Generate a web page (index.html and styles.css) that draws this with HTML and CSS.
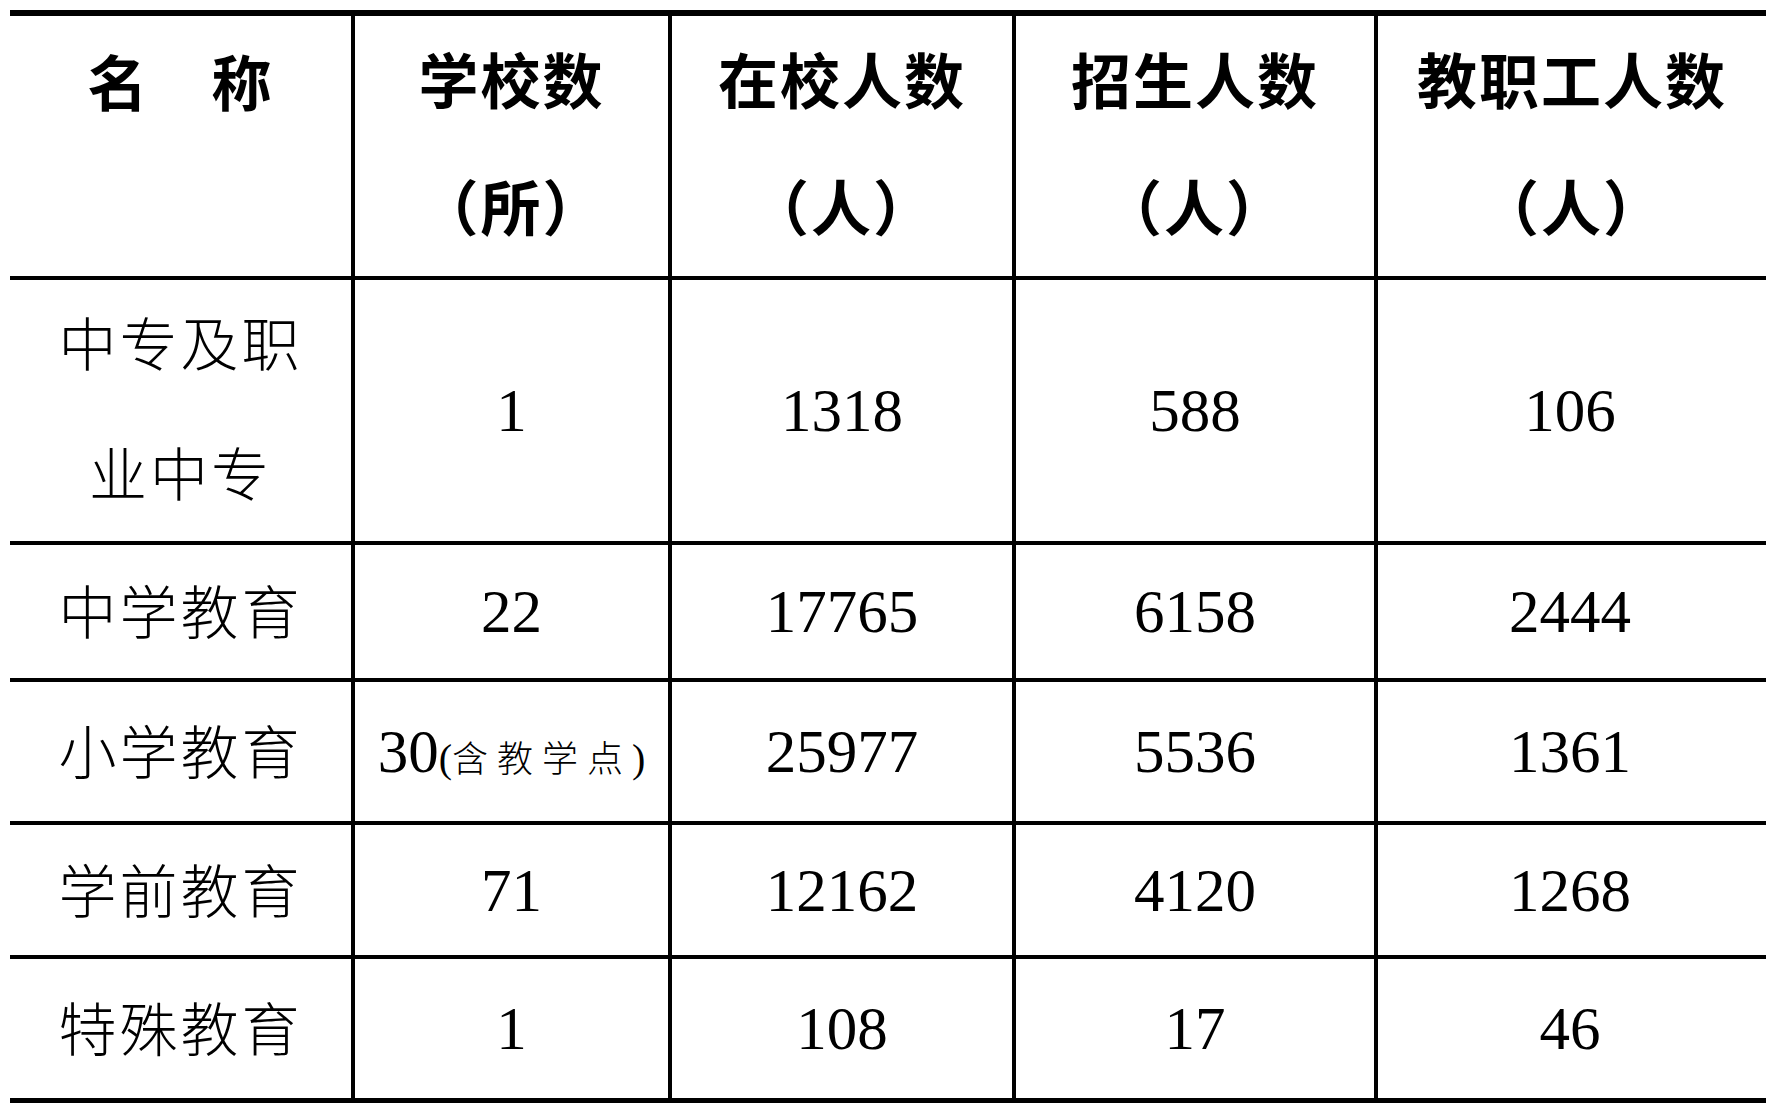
FILE: index.html
```html
<!DOCTYPE html>
<html lang="zh-CN">
<head>
<meta charset="utf-8">
<title>教育统计</title>
<link rel="stylesheet" href="styles.css">
</head>
<body>
<div class="table">
  <div class="cell head"><span class="line">名　称</span><span class="line"></span></div>
  <div class="cell head"><span class="line">学校数</span><span class="line">（所）</span></div>
  <div class="cell head"><span class="line">在校人数</span><span class="line">（人）</span></div>
  <div class="cell head"><span class="line">招生人数</span><span class="line">（人）</span></div>
  <div class="cell head last"><span class="line">教职工人数</span><span class="line">（人）</span></div>

  <div class="cell name two"><span class="line">中专及职</span><span class="line">业中专</span></div>
  <div class="cell num">1</div>
  <div class="cell num">1318</div>
  <div class="cell num">588</div>
  <div class="cell num last">106</div>

  <div class="cell name">中学教育</div>
  <div class="cell num">22</div>
  <div class="cell num">17765</div>
  <div class="cell num">6158</div>
  <div class="cell num last">2444</div>

  <div class="cell name">小学教育</div>
  <div class="cell num">30<span class="note"><span class="paren">(</span>含教学点<span class="paren">)</span></span></div>
  <div class="cell num">25977</div>
  <div class="cell num">5536</div>
  <div class="cell num last">1361</div>

  <div class="cell name">学前教育</div>
  <div class="cell num">71</div>
  <div class="cell num">12162</div>
  <div class="cell num">4120</div>
  <div class="cell num last">1268</div>

  <div class="cell name bottom">特殊教育</div>
  <div class="cell num bottom">1</div>
  <div class="cell num bottom">108</div>
  <div class="cell num bottom">17</div>
  <div class="cell num bottom last">46</div>
</div>
</body>
</html>
```

FILE: styles.css
```css
html, body {
  background: #ffffff;
}

body {
  margin: 10px 0 0 10px;
  color: #000000;
}

.table {
  display: grid;
  width: 1756px;
  grid-template-columns: 345px 317px 344px 362px 388px;
  grid-template-rows: 264px 265px 137px 143px 134px 144px;
  border-top: 6px solid #000000;
}

.cell {
  box-sizing: border-box;
  border-right: 4px solid #000000;
  border-bottom: 4px solid #000000;
  display: flex;
  flex-direction: column;
  align-items: center;
  justify-content: center;
  text-align: center;
}

.cell.last {
  border-right: none;
}

.cell.bottom {
  border-bottom-width: 5px;
}

.head {
  padding-bottom: 10px;
  font-family: "Noto Sans CJK SC", sans-serif;
  font-weight: 700;
  font-size: 60px;
  letter-spacing: 2px;
}

.head .line {
  display: block;
  height: 127px;
  line-height: 127px;
  white-space: nowrap;
}

.name {
  padding-bottom: 5px;
  font-family: "Noto Sans CJK SC", sans-serif;
  font-weight: 300;
  font-size: 58px;
  letter-spacing: 3px;
  line-height: 130px;
  white-space: nowrap;
}

.name.two {
  padding-bottom: 10px;
}

.name .line {
  display: block;
  height: 130px;
}

.num {
  flex-direction: row;
  align-items: baseline;
  justify-content: center;
  align-content: center;
  flex-wrap: wrap;
  font-family: "Liberation Serif", serif;
  font-size: 61px;
  line-height: 1;
  white-space: nowrap;
}

.num.last {
  padding-right: 4px;
}

.note {
  font-family: "Noto Sans CJK SC", sans-serif;
  font-weight: 300;
  font-size: 36px;
  letter-spacing: 9px;
}

.note .paren {
  font-family: "Liberation Serif", serif;
  font-size: 40px;
  letter-spacing: 0;
}
```
